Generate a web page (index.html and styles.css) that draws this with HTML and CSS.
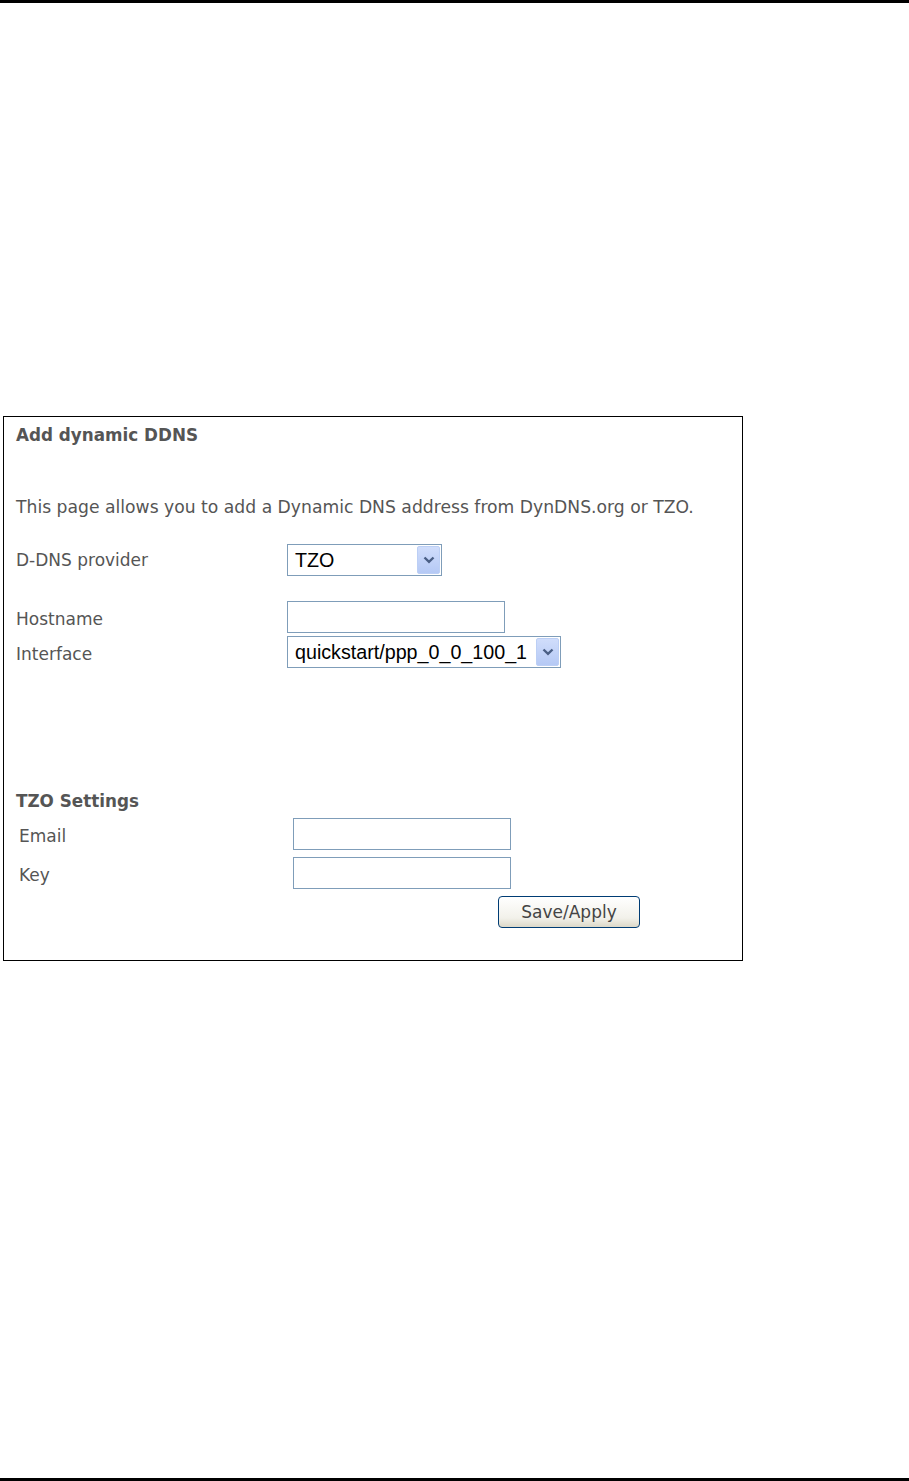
FILE: index.html
```html
<!DOCTYPE html>
<html lang="en">
<head>
    <meta charset="UTF-8">
    <title>Add dynamic DDNS</title>
    <link rel="stylesheet" href="styles.css">
</head>
<body>
    <div class="top-rule"></div>

    <div class="frame">
        <div class="title">Add dynamic DDNS</div>
        <p class="intro">This page allows you to add a Dynamic DNS address from DynDNS.org or TZO.</p>

        <div class="row row-provider">
            <span class="label">D-DNS provider</span>
            <div class="select select-provider">
                <span class="select-text">TZO</span>
                <span class="arrow"><svg width="12" height="8" viewBox="0 0 12 8"><path d="M1.5 1.5 L6 5.8 L10.5 1.5" fill="none" stroke="#4a5f85" stroke-width="2.4"/></svg></span>
            </div>
        </div>

        <div class="row row-host">
            <span class="label low">Hostname</span>
            <input type="text" class="field">
        </div>
        <div class="row row-iface">
            <span class="label low">Interface</span>
            <div class="select select-iface">
                <span class="select-text">quickstart/ppp_0_0_100_1</span>
                <span class="arrow"><svg width="12" height="8" viewBox="0 0 12 8"><path d="M1.5 1.5 L6 5.8 L10.5 1.5" fill="none" stroke="#4a5f85" stroke-width="2.4"/></svg></span>
            </div>
        </div>

        <div class="title title-tzo">TZO Settings</div>
        <div class="tzo">
            <div class="row row-email">
                <span class="label low">Email</span>
                <input type="text" class="field">
            </div>
            <div class="row row-key">
                <span class="label low">Key</span>
                <input type="password" class="field">
            </div>
        </div>

        <button class="save" type="button">Save/Apply</button>
    </div>

    <div class="bottom-rule"></div>
</body>
</html>
```

FILE: styles.css
```css
body { margin: 0; height: 1481px; display: flex; flex-direction: column; background: #fff; font-family: "DejaVu Sans", Verdana, sans-serif; font-size: 17px; color: #555; }
.top-rule { height: 3px; background: #000; }
.bottom-rule { height: 3px; background: #000; margin-top: auto; }

.frame { width: 714px; margin: 413px 0 0 3px; border: 1px solid #000; padding: 8px 12px 32px; }
.title { font-weight: bold; font-size: 16.8px; line-height: 20px; height: 20px; }
.intro { margin: 52px 0 0; line-height: 20px; font-size: 17.2px; }

.row { display: flex; align-items: center; }
.label { width: 271px; flex: none; }
.label.low { padding-top: 3px; }
.row-provider { margin-top: 27px; }
.row-host { margin-top: 25px; }
.row-iface { margin-top: 3px; }

.title-tzo { margin-top: 123px; }
.tzo { padding-left: 3px; }
.tzo .label { width: 274px; }
.row-email { margin-top: 7px; }
.row-key { margin-top: 7px; }

.field { width: 218px; height: 32px; box-sizing: border-box; margin: 0; border: 1px solid #7f9db9; padding: 0 4px; background: #fff; }

.select { height: 32px; box-sizing: border-box; border: 1px solid #7f9db9; display: flex; align-items: center; justify-content: space-between; padding: 0 1px 0 7px; background: #fff; font-family: "Liberation Sans", Arial, sans-serif; font-size: 19.7px; color: #000; }
.select-provider { width: 155px; }
.select-iface { width: 274px; }
.arrow { width: 23px; height: 28px; box-sizing: border-box; border: 1px solid #bccff5; border-radius: 2px; background: linear-gradient(#d0ddfb, #b5c9f5); display: flex; align-items: center; justify-content: center; }

.save { display: block; margin: 7px 0 0 482px; width: 142px; height: 32px; border: 1px solid #003c74; border-radius: 4px; background: linear-gradient(#ffffff, #f2f1ea 70%, #dcd8c8); font-family: "DejaVu Sans", Verdana, sans-serif; font-size: 17px; color: #444; padding: 0; }
```
